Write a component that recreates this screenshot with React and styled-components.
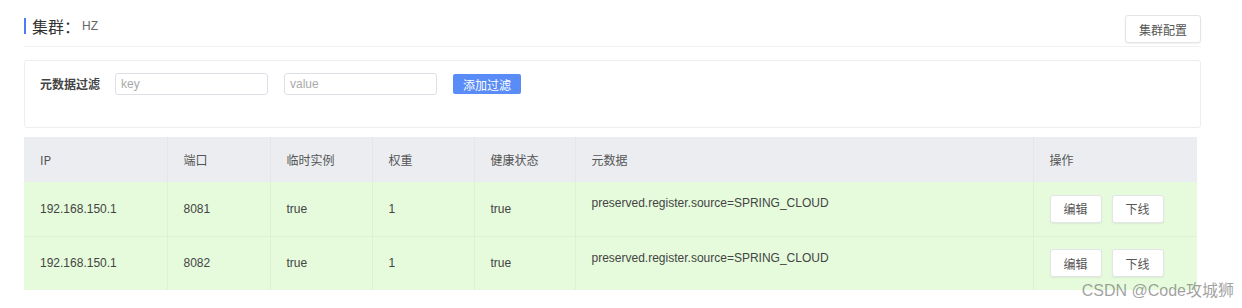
import React from 'react'
import styled, { createGlobalStyle } from 'styled-components'

const GlobalStyle = createGlobalStyle`
  body {
    margin: 0;
    background: #ffffff;
    font-family: "Liberation Sans", "Noto Sans CJK SC", sans-serif;
    color: #333;
  }
`

const Page = styled.div`
  position: relative;
  width: 1242px;
  height: 308px;
  padding-left: 24px;
  box-sizing: border-box;
  overflow: hidden;
`

const Header = styled.div`
  width: 1177px;
  height: 47px;
  padding-top: 15px;
  box-sizing: border-box;
  display: flex;
  align-items: flex-start;
  justify-content: space-between;
  border-bottom: 1px solid #f0f1f3;
`

const Title = styled.div`
  display: flex;
  align-items: center;
  height: 16px;
  margin-top: 3px;
  border-left: 2px solid #4e7cf6;
  padding-left: 6px;
  font-size: 16px;
  color: #333;
  font-family: "Noto Sans CJK SC", sans-serif;
  line-height: 16px;
`

const TitleValue = styled.span`
  font-size: 12px;
  color: #666;
  margin-left: 2px;
  font-family: "Liberation Sans", sans-serif;
`

const Button = styled.button`
  height: ${p => p.$h || 28}px;
  padding: 0 ${p => p.$px || 12}px;
  background: #fff;
  border: 1px solid #e2e4e8;
  border-radius: 3px;
  font-family: "Noto Sans CJK SC", sans-serif;
  font-size: 12px;
  color: #555;
  box-shadow: 0 1px 2px rgba(0, 0, 0, 0.06);
  cursor: pointer;
`

const FilterCard = styled.div`
  width: 1177px;
  height: 68px;
  margin-top: 13px;
  box-sizing: border-box;
  border: 1px solid #eceef1;
  border-radius: 3px;
  padding: 12px 15px;
  display: flex;
  align-items: flex-start;
`

const FilterLabel = styled.span`
  font-family: "Noto Sans CJK SC", sans-serif;
  font-size: 12px;
  font-weight: 700;
  color: #444;
  line-height: 22px;
  margin-right: 15px;
`

const Input = styled.input`
  width: 153px;
  height: 22px;
  box-sizing: border-box;
  border: 1px solid #dcdfe4;
  border-radius: 3px;
  padding: 0 5px;
  margin-right: 16px;
  font-family: "Liberation Sans", sans-serif;
  font-size: 12px;
  color: #333;
  outline: none;
  &::placeholder {
    color: #aaa;
  }
`

const PrimaryButton = styled.button`
  height: 20px;
  margin-top: 1px;
  padding: 0 10px;
  background: #5a8cf8;
  border: none;
  border-radius: 2px;
  color: #fff;
  font-family: "Noto Sans CJK SC", sans-serif;
  font-size: 12px;
  cursor: pointer;
`

const Table = styled.table`
  width: 1173px;
  margin-top: 9px;
  border-collapse: collapse;
  table-layout: fixed;
  font-size: 12px;
`

const Th = styled.th`
  height: 45px;
  padding: 0 16px;
  background: #ebedf1;
  text-align: left;
  font-weight: 400;
  color: #555;
  font-family: "Noto Sans CJK SC", sans-serif;
  border-right: 1px solid #e3e6eb;
  &:last-child {
    border-right: none;
  }
`

const Tr = styled.tr`
  background: #e5fbdb;
  & + & td {
    border-top: 1px solid #dcf2d2;
  }
`

const Td = styled.td`
  height: 54px;
  padding: 0 16px;
  color: #444;
  vertical-align: ${p => (p.$top ? 'top' : 'middle')};
  padding-top: ${p => (p.$top ? '14px' : '0')};
  box-sizing: border-box;
  border-right: 1px solid #dcf2d2;
  &:last-child {
    border-right: none;
  }
`

const Actions = styled.div`
  display: flex;
  gap: 10px;
`

const Watermark = styled.div`
  position: absolute;
  right: 8px;
  bottom: 7px;
  font-size: 16px;
  color: rgba(120, 120, 120, 0.7);
  font-family: "Liberation Sans", "Noto Sans CJK SC", sans-serif;
`

const columns = [
  { title: 'IP', width: 143 },
  { title: '端口', width: 103 },
  { title: '临时实例', width: 102 },
  { title: '权重', width: 102 },
  { title: '健康状态', width: 101 },
  { title: '元数据', width: 458 },
  { title: '操作', width: 164 },
]

const rows = [
  { ip: '192.168.150.1', port: '8081', ephemeral: 'true', weight: '1', healthy: 'true', meta: 'preserved.register.source=SPRING_CLOUD' },
  { ip: '192.168.150.1', port: '8082', ephemeral: 'true', weight: '1', healthy: 'true', meta: 'preserved.register.source=SPRING_CLOUD' },
]

const App = () => {
  return (
    <Page>
      <GlobalStyle />
      <Header>
        <Title>
          集群：<TitleValue>HZ</TitleValue>
        </Title>
        <Button $h={28} $px={13}>集群配置</Button>
      </Header>

      <FilterCard>
        <FilterLabel>元数据过滤</FilterLabel>
        <Input placeholder="key" />
        <Input placeholder="value" />
        <PrimaryButton>添加过滤</PrimaryButton>
      </FilterCard>

      <Table>
        <colgroup>
          {columns.map(c => (
            <col key={c.title} style={{ width: c.width }} />
          ))}
        </colgroup>
        <thead>
          <tr>
            {columns.map(c => (
              <Th key={c.title}>{c.title}</Th>
            ))}
          </tr>
        </thead>
        <tbody>
          {rows.map(r => (
            <Tr key={r.port}>
              <Td>{r.ip}</Td>
              <Td>{r.port}</Td>
              <Td>{r.ephemeral}</Td>
              <Td>{r.weight}</Td>
              <Td>{r.healthy}</Td>
              <Td $top>{r.meta}</Td>
              <Td>
                <Actions>
                  <Button $px={13}>编辑</Button>
                  <Button $px={13}>下线</Button>
                </Actions>
              </Td>
            </Tr>
          ))}
        </tbody>
      </Table>

      <Watermark>CSDN @Code攻城狮</Watermark>
    </Page>
  )
}

export default App
